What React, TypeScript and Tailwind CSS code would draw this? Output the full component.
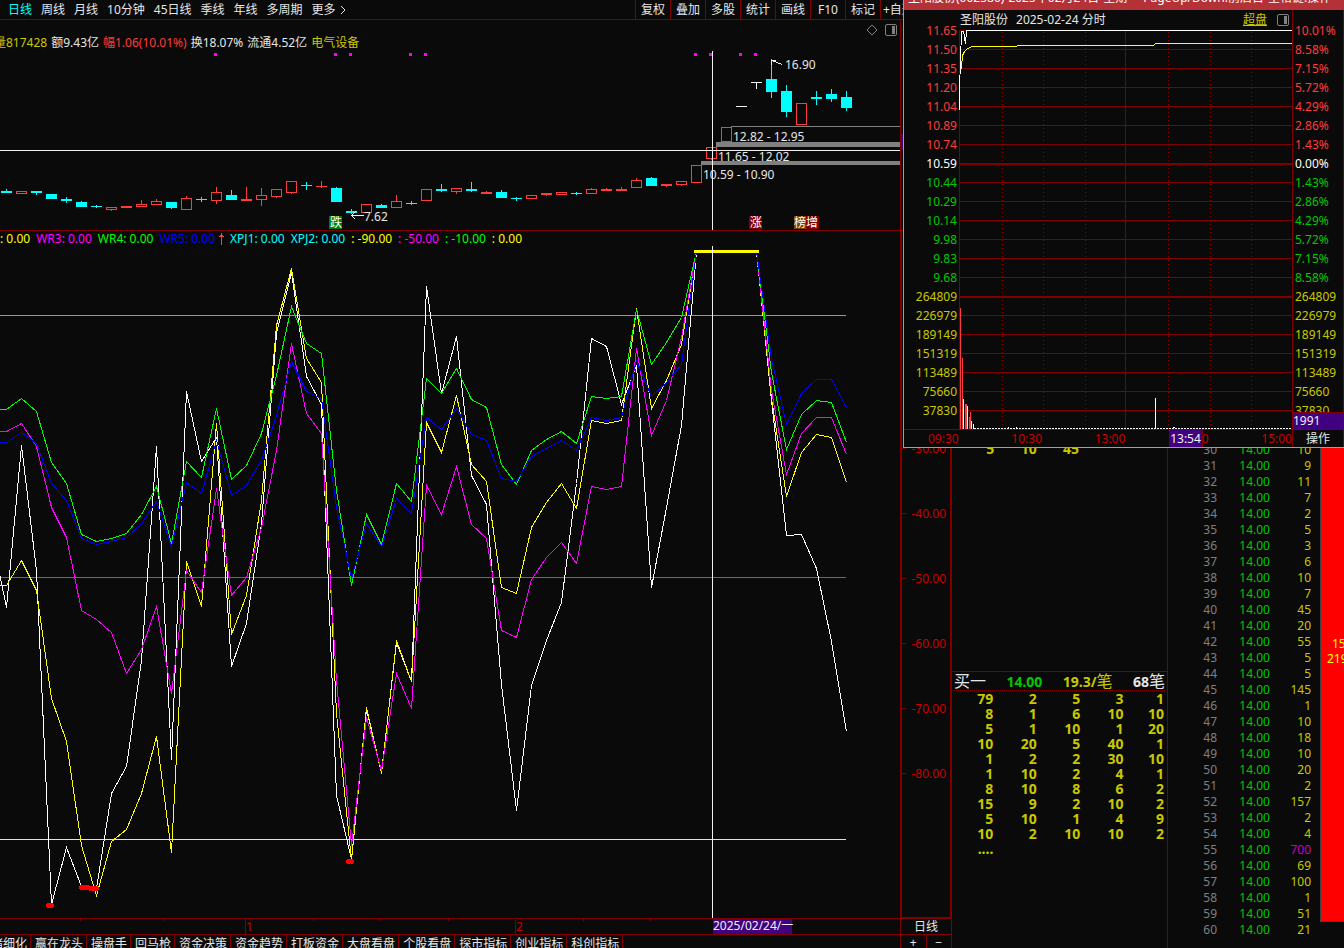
import clsx from "clsx";

const periods = ["日线", "周线", "月线", "10分钟", "45日线", "季线", "年线", "多周期", "更多"];
const tools = ["复权", "叠加", "多股", "统计", "画线", "F10", "标记"];
const pages = [
  "情绪细化",
  "赢在龙头",
  "操盘手",
  "回马枪",
  "资金决策",
  "资金趋势",
  "打板资金",
  "大盘看盘",
  "个股看盘",
  "探市指标",
  "创业指标",
  "科创指标",
];

// kind, body top, body bottom, high, low
type Candle = ["c" | "r" | "w", number, number, number, number];

const candles: Candle[] = [
  ["c", 191, 193, 189, 193],
  ["r", 191, 194, 191, 194],
  ["c", 191, 193, 191, 195],
  ["c", 194, 199, 194, 199],
  ["c", 199, 201, 197, 203],
  ["c", 202, 207, 201, 207],
  ["c", 206, 207, 205, 208],
  ["r", 207, 210, 207, 211],
  ["r", 206, 208, 206, 208],
  ["r", 204, 207, 200, 207],
  ["r", 201, 205, 199, 205],
  ["c", 202, 208, 202, 209],
  ["r", 198, 210, 196, 210],
  ["c", 199, 200, 197, 202],
  ["r", 192, 201, 187, 204],
  ["c", 195, 200, 190, 200],
  ["r", 199, 201, 187, 201],
  ["r", 195, 200, 188, 206],
  ["r", 189, 197, 189, 198],
  ["r", 181, 193, 181, 194],
  ["c", 185, 186, 182, 190],
  ["r", 186, 187, 181, 188],
  ["c", 188, 202, 187, 202],
  ["c", 211, 213, 209, 214],
  ["r", 204, 213, 204, 213],
  ["c", 205, 208, 204, 208],
  ["r", 201, 208, 195, 208],
  ["c", 203, 204, 201, 205],
  ["r", 189, 201, 189, 201],
  ["c", 189, 191, 184, 192],
  ["r", 188, 192, 188, 194],
  ["c", 189, 191, 182, 192],
  ["r", 192, 194, 191, 194],
  ["c", 192, 198, 190, 198],
  ["c", 198, 199, 197, 201],
  ["r", 195, 199, 195, 199],
  ["r", 193, 195, 193, 196],
  ["r", 192, 195, 192, 195],
  ["c", 193, 194, 192, 195],
  ["r", 189, 194, 188, 194],
  ["r", 189, 191, 188, 191],
  ["r", 189, 191, 187, 191],
  ["r", 180, 188, 178, 188],
  ["c", 178, 186, 177, 186],
  ["r", 184, 186, 184, 187],
  ["r", 181, 185, 181, 186],
  ["r", 165, 183, 165, 183],
  ["r", 147, 159, 147, 160],
  ["r", 127, 142, 127, 142],
  ["w", 106, 107, 106, 107],
  ["w", 82, 83, 82, 89],
  ["c", 79, 92, 59, 98],
  ["c", 91, 112, 85, 117],
  ["r", 103, 125, 103, 125],
  ["c", 97, 99, 91, 105],
  ["c", 94, 99, 89, 102],
  ["c", 97, 108, 91, 111],
];

const candleColor = { c: "#00ffff", r: "#ff3c3c", w: "#f0f0f0" };

const wr = [
  {
    color: "#ffffff",
    start: 576,
    y: [
      607, 445, 570, 904, 847, 886, 888, 793, 766, 660, 446, 759, 391, 461, 437, 666, 623, 523, 333, 272, 376, 404,
      795, 859, 709, 772, 642, 681, 286, 393, 336, 475, 504, 684, 810, 685, 640, 602, 483, 338, 346, 404, 365, 587,
      507, 425, 251, 251, 251, 251, 251, 400, 535, 534, 568, 641, 731,
    ],
  },
  {
    color: "#ffff00",
    start: 585,
    y: [
      585, 560, 590, 698, 741, 845, 895, 841, 829, 793, 736, 852, 561, 606, 423, 634, 595, 500, 325, 268, 358, 382,
      713, 860, 707, 773, 640, 681, 422, 452, 395, 464, 481, 587, 593, 527, 502, 483, 508, 420, 423, 420, 308, 408,
      380, 344, 251, 251, 251, 251, 251, 398, 496, 452, 434, 437, 482,
    ],
  },
  {
    color: "#ff00ff",
    start: 431,
    y: [
      431, 423, 446, 507, 537, 610, 619, 632, 673, 649, 606, 693, 570, 592, 488, 595, 577, 527, 450, 343, 413, 433,
      680, 845, 717, 770, 673, 708, 485, 514, 466, 524, 538, 630, 637, 579, 557, 542, 563, 486, 489, 486, 348, 435,
      400, 337, 251, 251, 251, 251, 251, 390, 474, 433, 417, 417, 454,
    ],
  },
  {
    color: "#00ff00",
    start: 409,
    y: [
      409, 398, 411, 462, 483, 534, 541, 538, 533, 514, 486, 543, 461, 477, 408, 479, 465, 433, 375, 306, 343, 353,
      490, 585, 514, 544, 483, 501, 378, 393, 368, 399, 407, 464, 484, 450, 439, 431, 443, 396, 398, 396, 309, 364,
      342, 317, 251, 251, 251, 251, 251, 372, 449, 414, 400, 402, 442,
    ],
  },
  {
    color: "#0000ff",
    start: 442,
    y: [
      442, 432, 443, 483, 500, 538, 544, 541, 537, 523, 501, 546, 482, 493, 440, 495, 485, 460, 415, 361, 391, 398,
      507, 578, 523, 546, 498, 513, 417, 429, 408, 434, 440, 478, 481, 456, 448, 440, 450, 417, 420, 417, 360, 396,
      382, 364, 251, 251, 251, 251, 251, 358, 424, 393, 379, 379, 407,
    ],
  },
];

const prices = [
  ["11.65", "10.01%"],
  ["11.50", "8.58%"],
  ["11.35", "7.15%"],
  ["11.20", "5.72%"],
  ["11.04", "4.29%"],
  ["10.89", "2.86%"],
  ["10.74", "1.43%"],
  ["10.59", "0.00%"],
  ["10.44", "1.43%"],
  ["10.29", "2.86%"],
  ["10.14", "4.29%"],
  ["9.98", "5.72%"],
  ["9.83", "7.15%"],
  ["9.68", "8.58%"],
  ["264809", "264809"],
  ["226979", "226979"],
  ["189149", "189149"],
  ["151319", "151319"],
  ["113489", "113489"],
  ["75660", "75660"],
  ["37830", "37830"],
];

const volumes = [
  10, 9, 11, 7, 2, 5, 3, 6, 10, 7, 45, 20, 55, 5, 5, 145, 1, 10, 18, 10, 20, 2, 157, 2, 4, 700, 69, 100, 1, 51, 21,
];

const orders = [
  ["79", "2", "5", "3", "1"],
  ["8", "1", "6", "10", "10"],
  ["5", "1", "10", "1", "20"],
  ["10", "20", "5", "40", "1"],
  ["1", "2", "2", "30", "10"],
  ["1", "10", "2", "4", "1"],
  ["8", "10", "8", "6", "2"],
  ["15", "9", "2", "10", "2"],
  ["5", "10", "1", "4", "9"],
  ["10", "2", "10", "10", "2"],
  ["....", "", "", "", ""],
];

const rowColor = (i: number) => {
  if (i < 7) return "text-[#ff3c3c]";
  if (i === 7) return "text-white";
  if (i < 14) return "text-[#00c800]";
  return "text-[#c8c800]";
};

const PanelIcon = () => (
  <svg width="12" height="12" viewBox="0 0 12 12" className="shrink-0">
    <rect x="0.5" y="0.5" width="11" height="11" rx="1.5" fill="none" stroke="#808080" />
    <rect x="7" y="2" width="3" height="8" fill="#808080" />
  </svg>
);

const Toolbar = () => (
  <header className="flex h-5 justify-between overflow-hidden border-b border-[#800000] pr-[441px]">
    <nav className="flex items-center gap-[9px] pl-2">
      {periods.map((p, i) => (
        <button key={p} className={clsx("flex shrink-0 items-center gap-1", i === 0 && "text-[#00ffff]")}>
          {p}
          {i === periods.length - 1 && (
            <svg width="6" height="10" viewBox="0 0 6 10" fill="none" stroke="currentColor">
              <path d="M1 1l4 4-4 4" />
            </svg>
          )}
        </button>
      ))}
    </nav>
    <div className="flex shrink-0">
      {tools.map((t) => (
        <button key={t} className="w-[35px] border-l border-[#800000] text-center">
          {t}
        </button>
      ))}
      <button className="w-[23px] overflow-hidden border-l border-[#800000] pl-0.5 text-left whitespace-nowrap">
        +自选
      </button>
    </div>
  </header>
);

const CandleChart = () => (
  <svg viewBox="0 51 900 179" className="block h-auto w-full" shapeRendering="crispEdges">
    {[214, 334, 349, 409, 424, 694, 709, 739, 754].map((x) => (
      <rect key={x} x={x} y="53" width="3" height="3" fill="#ff00ff" />
    ))}
    <rect x="731" y="126" width="169" height="1" fill="#808080" />
    <rect x="716" y="142" width="184" height="5" fill="#808080" />
    <rect x="701" y="161" width="199" height="4" fill="#808080" />
    {candles.map(([kind, top, bottom, high, low], i) => {
      const x = 6 + 15 * i;
      const color = candleColor[kind];
      const h = bottom - top;
      return (
        <g key={i} fill={color}>
          <rect x={x} y={high} width="1" height={low - high} />
          {kind === "r" && h > 2 ? (
            <rect x={x - 4.5} y={top + 0.5} width="10" height={h - 1} fill="#0a0a0a" stroke={color} />
          ) : (
            <rect x={x - 5} y={top} width="11" height={h} />
          )}
        </g>
      );
    })}
    <rect x="0" y="150" width="900" height="1" fill="#f0f0f0" />
    <rect x="712" y="51" width="1" height="179" fill="#f0f0f0" />
    <g fill="none" stroke="#f0f0f0">
      <path d="M771.5 60.5l11 4M771.5 60.5h4M771.5 60.5v4" />
      <path d="M351.5 215.5h12M355.5 211.5l-4 4 4 4" />
    </g>
    <g fill="#e6e6e6" fontSize="12">
      <text x="785" y="69">16.90</text>
      <text x="733" y="141">12.82 - 12.95</text>
      <text x="718" y="161">11.65 - 12.02</text>
      <text x="703" y="179">10.59 - 10.90</text>
      <text x="364" y="221">7.62</text>
    </g>
    <rect x="329" y="216" width="13" height="13" fill="#008000" />
    <rect x="749" y="216" width="13" height="13" fill="#800000" />
    <rect x="794" y="216" width="12" height="13" fill="#804000" />
    <rect x="806" y="216" width="13" height="13" fill="#800000" />
    <g fill="#ffffff" fontSize="12">
      <text x="330" y="227">跌</text>
      <text x="750" y="227">涨</text>
      <text x="794" y="227">榜增</text>
    </g>
  </svg>
);

const WrChart = () => (
  <svg viewBox="0 246 900 672" className="block h-auto w-full" shapeRendering="crispEdges">
    <rect x="0" y="315" width="846" height="1" fill="#00ff00" />
    <rect x="0" y="577" width="846" height="1" fill="#ff00ff" />
    <rect x="0" y="839" width="846" height="1" fill="#ffff00" />
    {wr.map((line) => (
      <polyline
        key={line.color}
        fill="none"
        stroke={line.color}
        points={[`0,${line.start}`, ...line.y.map((y, i) => `${6.5 + 15 * i},${y + 0.5}`)].join(" ")}
      />
    ))}
    <rect x="694" y="250" width="65" height="3" fill="#ffff00" />
    <rect x="712" y="246" width="1" height="672" fill="#f0f0f0" />
    <g stroke="#ff0000" strokeWidth="5" strokeLinecap="round">
      <path d="M48.5 905.5h3M81.5 887.5h6M90.5 888.5h6M348.5 861.5h3" />
    </g>
  </svg>
);

const DateAxis = () => (
  <svg viewBox="0 918 900 16" className="block h-auto w-full" shapeRendering="crispEdges">
    <g fill="#800000">
      <rect x="0" y="918" width="900" height="1" />
      {[80, 163, 313, 380, 448, 583, 650].map((x) => (
        <rect key={x} x={x} y="919" width="1" height="2" />
      ))}
      <rect x="245" y="919" width="1" height="15" />
      <rect x="515" y="919" width="1" height="15" />
    </g>
    <g fill="#c80000" fontSize="12">
      <text x="246" y="931">1</text>
      <text x="516" y="931">2</text>
    </g>
    <rect x="713" y="919" width="78" height="15" fill="#400080" />
    <rect x="791" y="919" width="1" height="15" fill="#800000" />
    <text x="713" y="930" fill="#f0f0f0" fontSize="12">
      2025/02/24/一
    </text>
  </svg>
);

const Main = () => (
  <main className="flex min-w-0 flex-1 flex-col">
    <div className="flex h-[31px] justify-between overflow-hidden">
      <p className="-ml-1.5 flex gap-1 self-end leading-4 whitespace-nowrap">
        <span className="text-[#c8c800]">量817428</span>
        <span>额9.43亿</span>
        <span className="text-[#ff3c3c]">幅1.06(10.01%)</span>
        <span>换18.07%</span>
        <span>流通4.52亿</span>
        <span className="text-[#c8c800]">电气设备</span>
      </p>
      <div className="flex items-start gap-[7px] pt-1 pr-[3px]">
        <svg width="12" height="12" viewBox="0 0 12 12" fill="none" stroke="#808080">
          <path d="M6 1l5 5-5 5-5-5z" />
        </svg>
        <PanelIcon />
      </div>
    </div>
    <CandleChart />
    <p className="flex h-4 items-center gap-1.5 border-t border-[#800000] leading-4 whitespace-nowrap">
      <span className="text-[#ffff00]">: 0.00</span>
      <span className="text-[#ff00ff]">WR3: 0.00</span>
      <span className="text-[#00ff00]">WR4: 0.00</span>
      <span className="flex items-center gap-1 text-[#0000ff]">
        WR5: 0.00
        <svg width="5" height="12" viewBox="0 0 5 12" fill="#ff3c3c" shapeRendering="crispEdges">
          <path d="M2 0h1v12h-1zM1 2h3v1h-3zM0 3h5v1h-5z" />
        </svg>
      </span>
      <span className="text-[#00ffff]">XPJ1: 0.00</span>
      <span className="text-[#00ffff]">XPJ2: 0.00</span>
      <span className="text-[#ffff00]">: -90.00</span>
      <span className="text-[#ff00ff]">: -50.00</span>
      <span className="text-[#00ff00]">: -10.00</span>
      <span className="text-[#ffff00]">: 0.00</span>
    </p>
    <WrChart />
    <DateAxis />
    <nav className="flex h-[14px] overflow-hidden border-t border-[#800000]">
      {pages.map((p, i) => (
        <button
          key={p}
          className={clsx(
            "shrink-0 border-r border-[#800000] pr-[3px] pl-1 leading-[17px] whitespace-nowrap",
            i === 0 && "-ml-[25px]",
          )}
        >
          {p}
        </button>
      ))}
    </nav>
  </main>
);

const ScaleColumn = () => (
  <div className="flex w-[52px] shrink-0 flex-col">
    <div className="h-[210px] border-l border-[#800000] pt-[114px]">
      <div className="h-4 bg-[#400080]" />
    </div>
    <ul className="flex-1 border-2 border-t border-[#800000] pt-[185px] text-[#c80000]">
      {["-30.00", "-40.00", "-50.00", "-60.00", "-70.00", "-80.00"].map((v) => (
        <li key={v} className="flex h-[65px] items-center justify-between pr-1">
          <span className="w-1 border-t border-[#800000]" />
          {v}
        </li>
      ))}
    </ul>
    <button className="h-[15px] border-x border-[#800000] leading-[15px]">日线</button>
    <div className="flex h-[14px] border border-b-0 border-[#800000] leading-[15px]">
      <button className="flex-1 border-r border-[#800000]">+</button>
      <button className="flex-1">−</button>
    </div>
  </div>
);

const OrderPanel = () => (
  <section className="w-[216px] shrink-0 border-r border-[#800000] text-sm leading-[15px] font-bold text-[#c8c800]">
    <div className="h-[652px] border-b border-[#800000] pt-[421px]">
      <p className="flex justify-end pr-[88px] text-right">
        <span className="w-[43px]">5</span>
        <span className="w-[43px]">10</span>
        <span className="w-[43px]">45</span>
      </p>
    </div>
    <div className="mx-0.5 flex h-[19px] items-center justify-between border-b border-dotted border-[#800000]">
      <span className="text-base leading-4 font-normal text-[#e6e6e6]">买一</span>
      <span className="text-[#00c800]">14.00</span>
      <span className="leading-4">
        19.3/<span className="text-base leading-4 font-normal">笔</span>
      </span>
      <span className="leading-4 text-[#e6e6e6]">
        68<span className="text-base leading-4 font-normal">笔</span>
      </span>
    </div>
    <table className="w-full text-right">
      <tbody>
        {orders.map((row, r) => (
          <tr key={r}>
            {row.map((cell, c) => (
              <td key={c} className={clsx("p-0", c === 0 ? "w-[41px]" : "w-[43px]", c === 4 && "pr-[3px]")}>
                {cell}
              </td>
            ))}
          </tr>
        ))}
      </tbody>
    </table>
  </section>
);

const TickList = () => (
  <section className="flex w-[152px] shrink-0 flex-col justify-end pr-[9px] pb-2.5">
    <table className="w-full text-right leading-4">
      <tbody>
        {volumes.map((v, i) => (
          <tr key={i}>
            <td className="w-[49px] p-0 text-[#808080]">{30 + i}</td>
            <td className="w-[53px] p-0 text-[#00c800]">14.00</td>
            <td className={clsx("p-0", v >= 500 ? "text-[#c800c8]" : "text-[#c8c800]")}>{v}</td>
          </tr>
        ))}
      </tbody>
    </table>
  </section>
);

const RedStrip = () => (
  <aside className="w-6 shrink-0 overflow-hidden pb-[26px]">
    <div className="h-full border-b border-l border-[#404040] bg-[#ff0000] pt-[616px] leading-[15px] text-[#ffff00]">
      <p className="pl-[11px]">15</p>
      <p className="pl-1.5">219</p>
    </div>
  </aside>
);

const IntradayPlot = () => (
  <svg viewBox="959 30 333 399" className="block h-auto w-full" shapeRendering="crispEdges">
    <g fill="#800000">
      <rect x="959" y="30" width="1" height="399" />
      <rect x="1125" y="30" width="1" height="399" />
      {prices.map((_, i) => (
        <rect key={i} x="959" y={30 + 19 * i} width="333" height={i === 7 || i === 14 ? 2 : 1} />
      ))}
    </g>
    <g stroke="#800000" strokeDasharray="1 3">
      {[1002, 1043, 1085, 1168, 1210, 1251].map((x) => (
        <line key={x} x1={x + 0.5} x2={x + 0.5} y1="32" y2="429" />
      ))}
    </g>
    <polyline
      fill="none"
      stroke="#ffff00"
      points="960.5,72 961.5,66 962.5,56 963.5,53 966.5,49.5 971.5,46.5 1016.5,46.5 1017.5,45.5 1153.5,45.5 1155.5,43.5 1292,43.5"
    />
    <polyline
      fill="none"
      stroke="#ffffff"
      points="959.5,110 959.5,90 960.5,60 961.5,32 962.5,31 963.5,31 965.5,44 966.5,31 967.5,30.5 1292,30.5"
    />
    <g fill="#ff3c3c">
      <rect x="960" y="308" width="1" height="121" />
      <rect x="962" y="358" width="1" height="71" />
      <rect x="966" y="404" width="1" height="25" />
      <rect x="970" y="412" width="1" height="17" />
    </g>
    <g fill="#00c800">
      <rect x="965" y="404" width="1" height="25" />
      <rect x="969" y="417" width="1" height="12" />
    </g>
    <g fill="#ffffff">
      <rect x="963" y="399" width="1" height="30" />
      <rect x="967" y="406" width="1" height="23" />
      <rect x="971" y="421" width="1" height="8" />
      <rect x="973" y="424" width="1" height="5" />
      <rect x="1155" y="398" width="1" height="31" />
      <rect x="1008" y="427" width="1" height="1" />
      <rect x="1016" y="427" width="1" height="1" />
      <rect x="1173" y="427" width="2" height="1" />
    </g>
    <line x1="974" x2="1292" y1="428.5" y2="428.5" stroke="#ffffff" strokeDasharray="2 1" />
  </svg>
);

const IntradayWindow = () => (
  <section className="absolute top-0 right-0 w-[441px] border-b border-l border-[#a0a0a0] bg-[#0a0a0a]">
    <h2 className="flex h-[10px] items-end gap-1 overflow-hidden bg-[#b43237] pb-1 pl-1 leading-4 whitespace-nowrap text-white">
      <span>圣阳股份(002580)</span>
      <span>2025年02月24日</span>
      <span>星期一</span>
      <span>PageUp/Down:前后日</span>
      <span>空格键:操作</span>
    </h2>
    <div className="flex">
      <ul className="w-[55px] shrink-0 pt-[11px] pr-0.5 text-right leading-[19px]">
        {prices.map(([price], i) => (
          <li key={i} className={rowColor(i)}>
            {price}
          </li>
        ))}
      </ul>
      <div className="min-w-0 flex-1">
        <div className="flex h-5 items-center pr-[3px] pl-px">
          <span>圣阳股份</span>
          <span className="flex-1 pl-2">2025-02-24 分时</span>
          <a href="#" className="mr-2.5 text-[#c8c800] underline">
            超盘
          </a>
          <PanelIcon />
        </div>
        <IntradayPlot />
      </div>
      <div className="relative w-[52px] shrink-0 border-x border-[#800000] pt-[11px] leading-[19px]">
        <ul className="pl-0.5">
          {prices.map(([, pct], i) => (
            <li key={i} className={rowColor(i)}>
              {pct}
            </li>
          ))}
        </ul>
        <p className="absolute inset-x-0 bottom-0 border-t border-[#800000] bg-[#400080] leading-4 text-[#f0f0f0]">
          1991
        </p>
      </div>
    </div>
    <div className="flex h-[18px] border-t border-[#800000] leading-[17px] text-[#c80000]">
      <div className="relative flex flex-1 justify-between pl-6">
        <span>09:30</span>
        <span>10:30</span>
        <span>13:00</span>
        <span>14:00</span>
        <span>15:00</span>
        <span className="absolute inset-y-0 left-[265px] w-[34px] border-r border-[#800000] bg-[#400080] text-center text-[#f0f0f0]">
          13:54
        </span>
      </div>
      <button className="w-[52px] border-x border-[#800000] text-[#e6e6e6]">操作</button>
    </div>
  </section>
);

export default function App() {
  return (
    <div className="relative flex min-h-screen w-full flex-col overflow-hidden bg-[#0a0a0a] font-['Noto_Sans','Noto_Sans_CJK_SC',sans-serif] text-xs text-[#e6e6e6]">
      <Toolbar />
      <div className="flex flex-1">
        <Main />
        <ScaleColumn />
        <OrderPanel />
        <TickList />
        <RedStrip />
      </div>
      <IntradayWindow />
    </div>
  );
}
